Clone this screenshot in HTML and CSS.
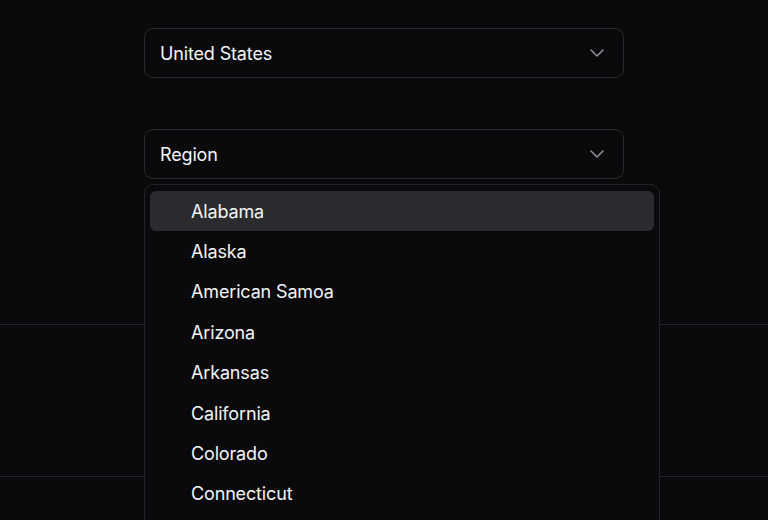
FILE: index.html
```html
<!DOCTYPE html>
<html lang="en">
<head>
<meta charset="utf-8">
<link rel="stylesheet" href="styles.css">
</head>
<body>
<div class="page">
  <div class="form">
    <div class="select">
      <span class="value">United States</span>
      <svg class="chev" viewBox="0 0 24 24" width="24" height="24"><path d="M6 9l6 6 6-6" fill="none" stroke="currentColor" stroke-width="1.6" stroke-linecap="round" stroke-linejoin="round"/></svg>
    </div>
    <div class="select second">
      <span class="value">Region</span>
      <svg class="chev" viewBox="0 0 24 24" width="24" height="24"><path d="M6 9l6 6 6-6" fill="none" stroke="currentColor" stroke-width="1.6" stroke-linecap="round" stroke-linejoin="round"/></svg>
    </div>
  </div>
  <div class="band"></div>
  <div class="listbox">
    <div class="option active">Alabama</div>
    <div class="option">Alaska</div>
    <div class="option">American Samoa</div>
    <div class="option">Arizona</div>
    <div class="option">Arkansas</div>
    <div class="option">California</div>
    <div class="option">Colorado</div>
    <div class="option">Connecticut</div>
  </div>
</div>
</body>
</html>
```

FILE: styles.css
```css
html, body {
  margin: 0;
  padding: 0;
  background: #0a0a0c;
  height: 100%;
  overflow: hidden;
}
body {
  font-family: Inter, "Noto Sans", sans-serif;
  color: #f4f4f5;
}
.page {
  position: relative;
  height: 520px;
}
.form {
  padding: 28px 0 0 144px;
  display: flex;
  flex-direction: column;
  gap: 51px;
}
.select {
  box-sizing: border-box;
  width: 480px;
  height: 50px;
  border: 1px solid #2a2a2e;
  border-radius: 9px;
  display: flex;
  align-items: center;
  justify-content: space-between;
  padding: 2px 14px 0 15px;
  font-size: 18px;
  letter-spacing: -0.15px;
}
.value {
  line-height: 1;
  color: #f4f4f5;
}
.chev {
  color: #8e8e93;
  margin-top: -2px;
}
.band {
  margin-top: 145px;
  height: 151px;
  border-top: 1px solid #26262a;
  border-bottom: 1px solid #26262a;
}
.listbox {
  position: absolute;
  left: 144px;
  top: 184px;
  width: 516px;
  box-sizing: border-box;
  border: 1px solid #232327;
  border-radius: 9px;
  background: #0a0a0c;
  padding: 6px 5px;
  height: 360px;
  overflow: hidden;
}
.option {
  height: 40.4px;
  display: flex;
  align-items: center;
  padding-left: 41px;
  font-size: 18px;
  letter-spacing: -0.15px;
  color: #f4f4f5;
  border-radius: 6px;
}
.option.active {
  background: #2b2b2f;
}
```
